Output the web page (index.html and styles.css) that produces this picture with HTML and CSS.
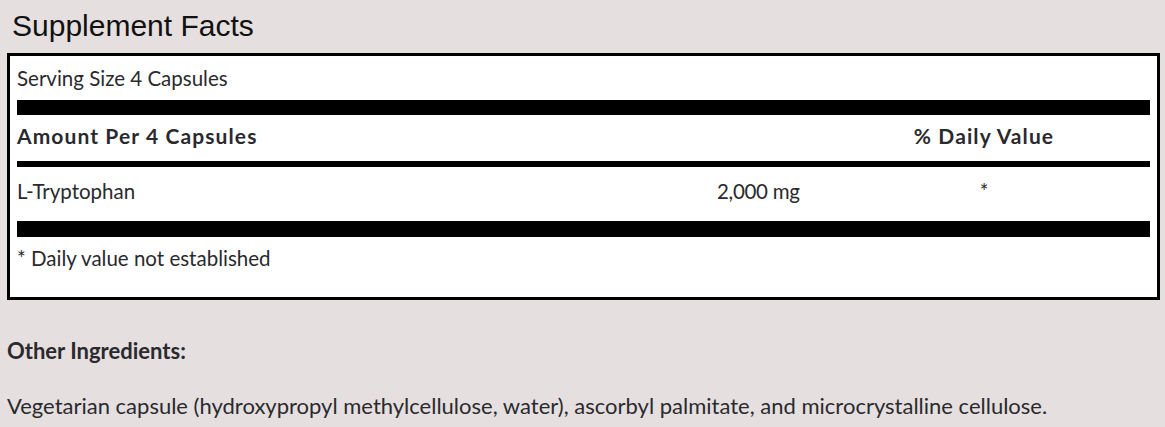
FILE: index.html
```html
<!DOCTYPE html>
<html lang="en">
<head>
<meta charset="utf-8">
<title>Supplement Facts</title>
<link rel="stylesheet" href="styles.css">
</head>
<body>
<h1 class="title">Supplement Facts</h1>
<section class="facts">
  <div class="serving">Serving Size 4 Capsules</div>
  <div class="bar bar-thick"></div>
  <div class="row row-head">
    <div class="cell-name">Amount Per 4 Capsules</div>
    <div class="cell-amount"></div>
    <div class="cell-dv">% Daily Value</div>
  </div>
  <div class="bar bar-thin"></div>
  <div class="row row-item">
    <div class="cell-name">L-Tryptophan</div>
    <div class="cell-amount">2,000 mg</div>
    <div class="cell-dv">*</div>
  </div>
  <div class="bar bar-thick bar-last"></div>
  <div class="footnote">* Daily value not established</div>
</section>
<h2 class="other-title">Other Ingredients:</h2>
<p class="other-text">Vegetarian capsule (hydroxypropyl methylcellulose, water), ascorbyl palmitate, and microcrystalline cellulose.</p>
</body>
</html>
```

FILE: styles.css
```css
html, body {
  margin: 0;
  padding: 0;
}
body {
  background: #e5dfdf;
  color: #2a2a2e;
  font-family: "Lato", "Liberation Sans", sans-serif;
  font-size: 22px;
  line-height: 24px;
  width: 1165px;
}
.title {
  margin: 0;
  padding: 9px 0 0 12px;
  font-family: "Liberation Sans", Arial, sans-serif;
  font-weight: normal;
  font-size: 30px;
  line-height: 34px;
  color: #111;
}
.facts {
  margin: 10px 0 0 7px;
  width: 1153px;
  box-sizing: border-box;
  border: 3px solid #000;
  background: #fff;
  padding: 10px 7px 27px 7px;
  font-size: 20.5px;
}
.serving {
  height: 24px;
}
.bar {
  background: #000;
}
.bar-thick {
  height: 15px;
  margin-top: 10px;
}
.bar-last {
  height: 16px;
  margin-top: 18px;
}
.bar-thin {
  height: 6px;
  margin-top: 13px;
}
.row {
  display: grid;
  grid-template-columns: 700px 167px 200px 1fr;
}
.row-head {
  margin-top: 9px;
  font-weight: bold;
  font-size: 21px;
  letter-spacing: 1.1px;
}
.row-item {
  margin-top: 12px;
}
.cell-amount {
  letter-spacing: -0.3px;
}
.cell-dv {
  text-align: center;
}
.footnote {
  margin-top: 9px;
}
.other-title {
  margin: 39px 0 0 7px;
  font-size: 22px;
  line-height: 24px;
  font-weight: bold;
}
.other-text {
  margin: 31px 0 0 7px;
}
```
